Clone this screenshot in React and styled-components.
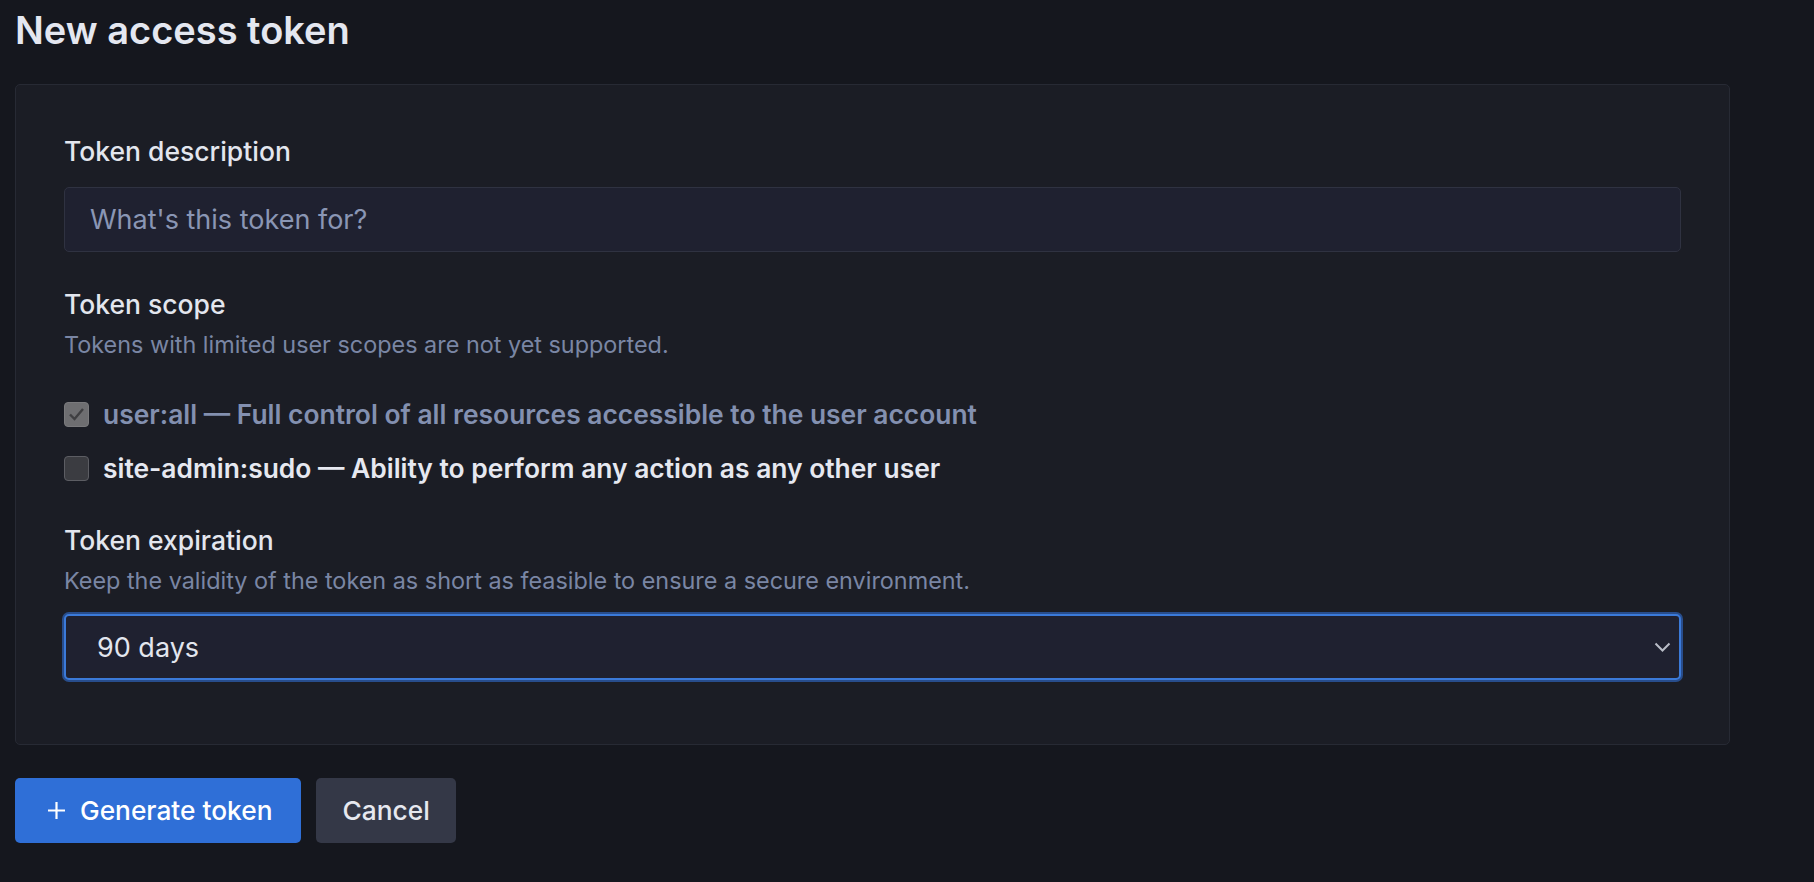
import React from 'react'
import styled, { createGlobalStyle } from 'styled-components'

const GlobalStyle = createGlobalStyle`
  html, body {
    margin: 0;
    background: #15171e;
  }
  body {
    font-family: Inter, 'Noto Sans', sans-serif;
    color: #e3e6ee;
    -webkit-font-smoothing: antialiased;
  }
`

const Page = styled.div`
  width: 1715px;
  padding: 8px 15px 40px;
`

const Title = styled.h1`
  margin: 0 0 32px;
  font-size: 38px;
  line-height: 44px;
  font-weight: 600;
  color: #e4e7f0;
`

const Panel = styled.div`
  display: flex;
  flex-direction: column;
  gap: 34px;
  background: #1b1d25;
  border: 1px solid #272a34;
  border-radius: 5px;
  padding: 48px 48px 64px;
`

const Field = styled.div`
  display: flex;
  flex-direction: column;
`

const Label = styled.div`
  font-size: 26.5px;
  line-height: 36px;
  font-weight: 500;
  color: #e3e6ee;
`

const Hint = styled.div`
  margin-top: 8px;
  font-size: 23.4px;
  line-height: 30px;
  color: #7a86a4;
`

const Input = styled.input`
  box-sizing: border-box;
  width: 100%;
  height: 65px;
  margin-top: 18px;
  padding: 0 25px;
  background: #1f2130;
  border: 1px solid #2f3241;
  border-radius: 5px;
  font-family: inherit;
  font-size: 27px;
  color: #e3e6ee;
  outline: none;
  &::placeholder {
    color: #8a96b4;
  }
`

const Options = styled.div`
  display: flex;
  flex-direction: column;
  gap: 14px;
  margin-top: 34px;
`

const Option = styled.label`
  display: flex;
  align-items: center;
  gap: 14px;
  height: 40px;
  font-size: 26.4px;
  font-weight: 600;
  color: ${(p) => (p.$muted ? '#8390b0' : '#e6e8f0')};
`

const Box = styled.span`
  box-sizing: border-box;
  width: 25px;
  height: 25px;
  flex: none;
  display: flex;
  align-items: center;
  justify-content: center;
  border-radius: 4px;
  background: ${(p) => (p.$checked ? '#6e6e71' : '#3b3c41')};
  border: 1.5px solid ${(p) => (p.$checked ? '#7a7a7d' : '#5c5d63')};
`

const SelectBox = styled.div`
  box-sizing: border-box;
  display: flex;
  align-items: center;
  justify-content: space-between;
  height: 66px;
  margin-top: 18px;
  padding: 0 8px 0 31px;
  background: #1f2130;
  border: 2px solid #3b7ad9;
  border-radius: 5px;
  box-shadow: 0 0 0 2px rgba(46, 98, 184, 0.7);
  font-size: 27px;
  color: #e3e6ee;
`

const Actions = styled.div`
  display: flex;
  gap: 15px;
  margin-top: 33px;
`

const Button = styled.button`
  display: flex;
  align-items: center;
  gap: 14px;
  height: 65px;
  padding: ${(p) => (p.$primary ? '0 29px 0 32px' : '0 26px')};
  border: none;
  border-radius: 5px;
  background: ${(p) => (p.$primary ? '#2f6fd7' : '#343847')};
  color: ${(p) => (p.$primary ? '#ffffff' : '#e6e8ef')};
  font-family: inherit;
  font-size: 26.3px;
  font-weight: 500;
`

const Check = () => (
  <svg width="17" height="14" viewBox="0 0 17 14">
    <path d="M2 7.5l4.5 4.5L15 2" fill="none" stroke="#3f3f42" strokeWidth="2.4" />
  </svg>
)

const Chevron = () => (
  <svg width="17" height="10" viewBox="0 0 17 10">
    <path d="M1.5 1.5l7 7 7-7" fill="none" stroke="#b9bdc7" strokeWidth="2" />
  </svg>
)

const Plus = () => (
  <svg width="19" height="19" viewBox="0 0 19 19">
    <path d="M9.5 1v17M1 9.5h17" stroke="#ffffff" strokeWidth="2.2" />
  </svg>
)

export default function App() {
  return (
    <Page>
      <GlobalStyle />
      <Title>New access token</Title>
      <Panel>
        <Field>
          <Label>Token description</Label>
          <Input placeholder="What's this token for?" />
        </Field>
        <Field>
          <Label>Token scope</Label>
          <Hint>Tokens with limited user scopes are not yet supported.</Hint>
          <Options>
            <Option $muted>
              <Box $checked>
                <Check />
              </Box>
              user:all — Full control of all resources accessible to the user account
            </Option>
            <Option>
              <Box />
              site-admin:sudo — Ability to perform any action as any other user
            </Option>
          </Options>
        </Field>
        <Field>
          <Label>Token expiration</Label>
          <Hint>Keep the validity of the token as short as feasible to ensure a secure environment.</Hint>
          <SelectBox>
            <span>90 days</span>
            <Chevron />
          </SelectBox>
        </Field>
      </Panel>
      <Actions>
        <Button $primary>
          <Plus />
          Generate token
        </Button>
        <Button>Cancel</Button>
      </Actions>
    </Page>
  )
}
